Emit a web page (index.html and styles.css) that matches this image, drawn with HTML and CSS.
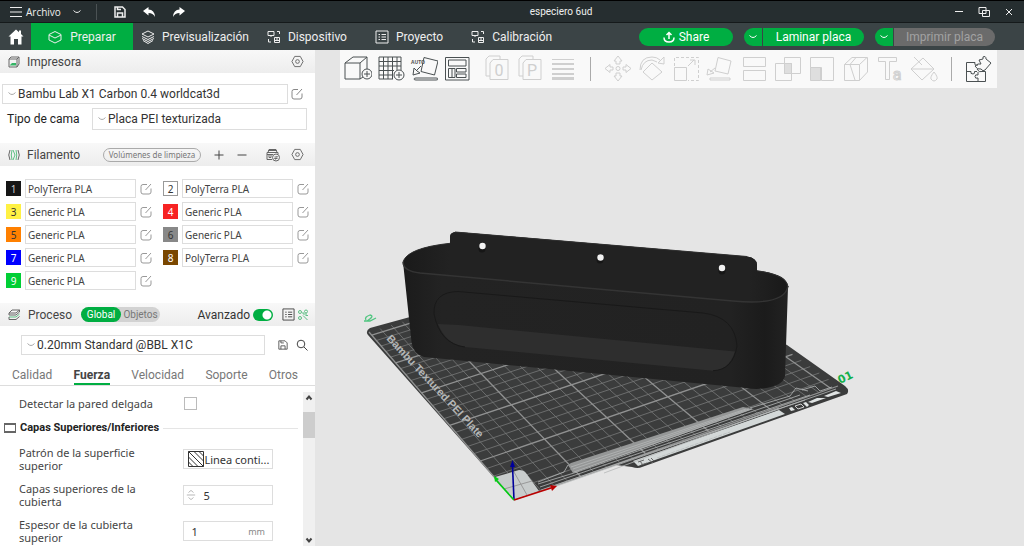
FILE: index.html
```html
<!DOCTYPE html>
<html lang="es">
<head>
<meta charset="utf-8">
<title>especiero 6ud</title>
<link rel="stylesheet" href="styles.css">
</head>
<body>
<svg class="defs" aria-hidden="true">
  <symbol id="chev" viewBox="0 0 10 10"><path d="M1.500 3.500Q5 7.500 8.500 3.500"/></symbol>
  <symbol id="edit" viewBox="0 0 12 12"><path d="M7 1.500H3Q1 1.500 1 3.500V9Q1 11 3 11H9Q11 11 11 9V5.500M5.500 7L11 1"/></symbol>
  <symbol id="gear" viewBox="0 0 14 14"><path d="M4 1.500H10L13 7L10 12.500H4L1 7Z"/><circle cx="7" cy="7" r="2"/></symbol>
  <symbol id="device" viewBox="0 0 14 14"><path d="M1 1.500H7V5.500H1ZM4 5.500V7M10 1.500H12.500V4M1.500 9V12H4M7.500 7.500H12.500V12.500H7.500ZM10 8V10M8 10.500H12"/></symbol>
  <symbol id="list" viewBox="0 0 14 14"><path d="M1 1H13V13H1ZM3.500 4.500H5M6.500 4.500H11M3.500 7H5M6.500 7H11M3.500 9.500H5M6.500 9.500H11"/></symbol>
  <symbol id="save" viewBox="0 0 12 12"><path d="M1 1H8.500L11 3.500V11H1ZM3.500 11V7H8.500V11M3.500 1V3.500H7"/></symbol>
</svg>

<header class="titlebar">
  <button class="file"><svg class="ic i12" viewBox="0 0 12 12"><path d="M0 1.500H12M0 6H12M0 10.500H12"/></svg>Archivo</button>
  <button class="drop" aria-label="Menú"><svg class="ic i10"><use href="#chev"/></svg></button>
  <span class="rule"></span>
  <button aria-label="Guardar"><svg class="ic i12 strong"><use href="#save"/></svg></button>
  <button aria-label="Deshacer"><svg class="solid i14" viewBox="0 0 14 14"><path d="M1 6L6.500 2V4.500Q12.500 4.500 13 12Q11 8 6.500 8V10.500Z"/></svg></button>
  <button aria-label="Rehacer"><svg class="solid i14" viewBox="0 0 14 14"><path d="M13 6L7.500 2V4.500Q1.500 4.500 1 12Q3 8 7.500 8V10.500Z"/></svg></button>
  <h1>especiero 6ud</h1>
  <div class="window">
    <button aria-label="Minimizar"><svg class="ic i12" viewBox="0 0 12 12"><path d="M2 5.500H10"/></svg></button>
    <button aria-label="Restaurar"><svg class="ic i12" viewBox="0 0 12 12"><path d="M1 1.500H8V7.500H1ZM4.500 4.500H11.500V10.500H4.500Z"/></svg></button>
    <button aria-label="Cerrar"><svg class="ic i12" viewBox="0 0 12 12"><path d="M3 3L9 9M9 3L3 9"/></svg></button>
  </div>
</header>

<nav class="topnav">
  <a class="home" href="#inicio" aria-label="Inicio"><svg class="solid i16" viewBox="0 0 16 16"><path d="M8 0.500L0.500 7.500H2.500V15.500H6V10H10V15.500H13.500V7.500H15.500L13 5V1.500H11V3.300Z"/></svg></a>
  <a class="tab active" href="#preparar"><svg class="ic i14" viewBox="0 0 14 14"><path d="M7 1.500L13 4.500V10L7 13L1 10V4.500ZM1 5L7 8L13 5"/></svg>Preparar</a>
  <a class="tab prev" href="#previsualizacion"><svg class="ic i14" viewBox="0 0 14 14"><path d="M7 1L13 4L7 7L1 4ZM1 6.500L7 9.500L13 6.500M1 8.500L7 11.500L13 8.500M2 10.500L7 13.500L12 10.500"/></svg>Previsualización</a>
  <a class="tab dev" href="#dispositivo"><svg class="ic i14"><use href="#device"/></svg>Dispositivo</a>
  <a class="tab proj" href="#proyecto"><svg class="ic i14"><use href="#list"/></svg>Proyecto</a>
  <a class="tab" href="#calibracion"><svg class="ic i14"><use href="#device"/></svg>Calibración</a>
  <div class="actions">
    <button class="pill share"><svg class="ic i12 strong" viewBox="0 0 12 12"><path d="M6 8V1.500M3.500 4L6 1.500L8.500 4M1 6.500Q1 11 6 11Q11 11 11 6.500"/></svg>Share</button>
    <div class="split"><button class="more" aria-label="Opciones de laminado"><svg class="ic i10"><use href="#chev"/></svg></button><button class="go">Laminar placa</button></div>
    <div class="split"><button class="more" aria-label="Opciones de impresión"><svg class="ic i10"><use href="#chev"/></svg></button><button class="go" disabled>Imprimir placa</button></div>
  </div>
</nav>

<main>
<aside>
  <div class="head">
    <svg class="ic i12" viewBox="0 0 12 12"><path d="M1 3L3 1H11V8L9 11H1ZM1 3H9V11M9 3L11 1"/><path class="gfill" d="M2 9L4 7H8V9.500H2Z"/></svg>
    <h2>Impresora</h2>
    <button class="end" aria-label="Ajustes de impresora"><svg class="ic i13"><use href="#gear"/></svg></button>
  </div>
  <div class="printer">
    <label class="combo"><svg class="ic i10"><use href="#chev"/></svg><select aria-label="Impresora"><option>Bambu Lab X1 Carbon 0.4 worldcat3d</option></select></label>
    <button aria-label="Editar impresora"><svg class="ic i12"><use href="#edit"/></svg></button>
  </div>
  <div class="bed">
    <label for="bed">Tipo de cama</label>
    <div class="combo tall"><svg class="ic i10"><use href="#chev"/></svg><select id="bed"><option>Placa PEI texturizada</option></select></div>
  </div>

  <div class="head filhead">
    <svg class="ic i12" viewBox="0 0 12 12"><path d="M2 1Q-0.500 6 2 11M10 1Q12.500 6 10 11"/><path class="gline" d="M4 1Q2.500 6 4 11M8 1Q9.500 6 8 11M5 1L7 6L5 11"/></svg>
    <h2>Filamento</h2>
    <button class="purge">Volúmenes de limpieza</button>
    <button class="plus" aria-label="Añadir"><svg class="ic i12 dark" viewBox="0 0 12 12"><path d="M6 1.500V10.500M1.500 6H10.500"/></svg></button>
    <button aria-label="Quitar"><svg class="ic i12 dark" viewBox="0 0 12 12"><path d="M1.500 6H10.500"/></svg></button>
    <button class="end" aria-label="AMS"><svg class="ic i14" viewBox="0 0 14 14"><path d="M2 4.500L3 1.500H10L11 4.500M1 4.500H12V6M1 4.500V11.500H6M2 2.500H11M1 6.500H7M3 7V9.500H5V7"/><circle cx="10" cy="9.500" r="3.500"/><path d="M8.500 9H11.500L10.500 8M11.500 10.500H8.500L9.500 11.500"/></svg></button>
    <button aria-label="Ajustes de filamento"><svg class="ic i13"><use href="#gear"/></svg></button>
  </div>
  <div class="filaments">
    <div class="fil"><button class="sw c1">1</button><select aria-label="Filamento 1"><option>PolyTerra PLA</option></select><button aria-label="Editar 1"><svg class="ic i12"><use href="#edit"/></svg></button></div>
    <div class="fil"><button class="sw c2">2</button><select aria-label="Filamento 2"><option>PolyTerra PLA</option></select><button aria-label="Editar 2"><svg class="ic i12"><use href="#edit"/></svg></button></div>
    <div class="fil"><button class="sw c3">3</button><select aria-label="Filamento 3"><option>Generic PLA</option></select><button aria-label="Editar 3"><svg class="ic i12"><use href="#edit"/></svg></button></div>
    <div class="fil"><button class="sw c4">4</button><select aria-label="Filamento 4"><option>Generic PLA</option></select><button aria-label="Editar 4"><svg class="ic i12"><use href="#edit"/></svg></button></div>
    <div class="fil"><button class="sw c5">5</button><select aria-label="Filamento 5"><option>Generic PLA</option></select><button aria-label="Editar 5"><svg class="ic i12"><use href="#edit"/></svg></button></div>
    <div class="fil"><button class="sw c6">6</button><select aria-label="Filamento 6"><option>Generic PLA</option></select><button aria-label="Editar 6"><svg class="ic i12"><use href="#edit"/></svg></button></div>
    <div class="fil"><button class="sw c7">7</button><select aria-label="Filamento 7"><option>Generic PLA</option></select><button aria-label="Editar 7"><svg class="ic i12"><use href="#edit"/></svg></button></div>
    <div class="fil"><button class="sw c8">8</button><select aria-label="Filamento 8"><option>PolyTerra PLA</option></select><button aria-label="Editar 8"><svg class="ic i12"><use href="#edit"/></svg></button></div>
    <div class="fil"><button class="sw c9">9</button><select aria-label="Filamento 9"><option>Generic PLA</option></select><button aria-label="Editar 9"><svg class="ic i12"><use href="#edit"/></svg></button></div>
  </div>

  <div class="head prochead">
    <svg class="ic i12" viewBox="0 0 12 12"><path d="M4 1H11.500L8 4H1ZM1 4V6H8L11.500 3V1"/><path class="gline" d="M1 8H8L11.500 5"/><path d="M1 10.500H8L11.500 7.500M1 8V10.500"/></svg>
    <h2>Proceso</h2>
    <div class="seg"><button class="on">Global</button><button>Objetos</button></div>
    <label class="adv end">Avanzado<input type="checkbox" role="switch" checked></label>
    <button aria-label="Lista"><svg class="ic i13 dark"><use href="#list"/></svg></button>
    <button class="cmp" aria-label="Comparar"><svg class="ic i12 green" viewBox="0 0 12 12"><circle cx="3" cy="3" r="1.500"/><circle cx="9" cy="2.500" r="1.500"/><circle cx="3" cy="9" r="1.500"/><path d="M6 3V5H10M6 6.500L10.500 11M8.500 6.500H11"/></svg></button>
  </div>
  <div class="preset">
    <label class="combo"><svg class="ic i10"><use href="#chev"/></svg><select aria-label="Proceso"><option>0.20mm Standard @BBL X1C</option></select></label>
    <button aria-label="Guardar perfil"><svg class="ic i10 dark"><use href="#save"/></svg></button>
    <button aria-label="Buscar"><svg class="ic i12 dark" viewBox="0 0 12 12"><circle cx="5" cy="5" r="3.800"/><path d="M8 8L11.500 11.500"/></svg></button>
  </div>
  <nav class="ptabs"><a href="#calidad">Calidad</a><a class="on" href="#fuerza">Fuerza</a><a href="#velocidad">Velocidad</a><a href="#soporte">Soporte</a><a href="#otros">Otros</a></nav>
  <div class="params">
    <div class="plist">
      <div class="param first"><label for="thin">Detectar la pared delgada</label><input id="thin" type="checkbox"></div>
      <h3><svg class="ic i12" viewBox="0 0 12 12"><path d="M0.500 1.500H11.500V10.500H0.500Z"/><path class="thick" d="M0 2H12M0 10H12"/></svg>Capas Superiores/Inferiores</h3>
      <div class="param"><label for="pat">Patrón de la superficie superior</label>
        <div class="field"><svg class="hatch" viewBox="0 0 16 16"><path d="M0.500 0.500H15.500V15.500H0.500ZM0.500 11L5 15.500M0.500 6L10 15.500M0.500 0.500L15.500 15.500M6 0.500L15.500 10M11 0.500L15.500 5"/></svg><select id="pat"><option>Linea conti...</option></select></div></div>
      <div class="param"><label for="lay">Capas superiores de la cubierta</label>
        <div class="field"><svg class="spin" viewBox="0 0 12 16"><path d="M3 5L6 2.500L9 5M1 8H11M3 11L6 13.500L9 11"/></svg><input id="lay" type="text" value="5"></div></div>
      <div class="param"><label for="thk">Espesor de la cubierta superior</label>
        <div class="field"><input id="thk" class="pad" type="text" value="1"><span class="unit">mm</span></div></div>
    </div>
    <div class="scroll"><svg viewBox="0 0 12 12"><path d="M3.500 7.500L6 4.500L8.500 7.500"/></svg><span class="thumb"></span><svg viewBox="0 0 12 12"><path d="M3.500 4.500L6 7.500L8.500 4.500"/></svg></div>
  </div>
</aside>

<section class="view">
  <svg class="scene" viewBox="315 50 709 496" role="img" aria-label="Vista 3D de la placa">
    <defs>
      <linearGradient id="body" x1="403" x2="788" y1="0" y2="0" gradientUnits="userSpaceOnUse">
        <stop offset="0" stop-color="#1b1b1b"/><stop offset=".1" stop-color="#232323"/><stop offset=".85" stop-color="#222"/><stop offset=".94" stop-color="#1b1b1b"/><stop offset="1" stop-color="#222"/>
      </linearGradient>
      <linearGradient id="wall" x1="403" x2="788" y1="0" y2="0" gradientUnits="userSpaceOnUse">
        <stop offset="0" stop-color="#1a1a1a"/><stop offset=".12" stop-color="#222"/><stop offset=".9" stop-color="#222"/><stop offset="1" stop-color="#191919"/>
      </linearGradient>
    </defs>
    <path class="plate" d="M370 328L410 317L640 262L787 345L845 386Q850 390 847 394L642 467Q638 469 632 467L616 465L514 500L368 335Q365 331 370 328Z"/>
    <g id="grid"></g>
    <path class="patch" d="M514 500L495 477L519 470Q524 470 526 473L539 491Z"/>
    <path class="patchline" d="M504 489L532 481M514 472L527 495"/>
    <path class="band" d="M568 465L571 463L743 407L753 409L573 473Z"/>
    <path class="bandlines" d="M571 467L746 409M573 469L749 409M574 472L752 409M568 465L564 472L538 482M538 484L574 473L800 395M540 487L810 395M541 490L805 400M545 490L836 389M750 408L790 396L796 388L808 391M802 390L815 386L820 391L832 387"/>
    <path class="strip" d="M633 461L779 410L785 414L638 466Z"/>
    <path class="striplines" d="M638 462L644 460M641 465L647 463M640 461L643 465M648 459L653 463M651 458L654 461"/>
    <path class="stripmid" d="M657 458L730 432"/>
    <path class="bandlines" d="M604 473L779 408"/>
    <path class="white" d="M808 402L817 398L826 398L812 403ZM824 396L836 391L841 393L828 397ZM789 408L792 407L795 410L791 411ZM803 403L806 402L809 405L807 407Z"/>
    <path class="whiteline" d="M795 406L801 404L804 407L798 409Z"/>
    <text class="plate-text" transform="translate(386 339) rotate(47)">Bambu Textured PEI Plate</text>
    <path class="box" d="M403 262Q407 248 450 243.300V237Q450 232 457 232L747 256.500Q757 258 757 265V270.700Q788 274 788 287L785 376Q783 386 763 388.500Q755 389.500 746 388L424 357Q413 354 411.500 342Z"/>
    <path class="inner" d="M404 262Q407 248 450 243.500V237Q450 232 457 232L747 256.500Q757 258 757 265V270.700Q787 275 787 287Q785 301 758 302.500L733 301L420 273Q403 270 404 262Z"/>
    <path class="rim" d="M403 262Q403 271 420 273L620 291L733 301Q785 306 788 286"/>
    <path class="rim soft" d="M403 262Q407 248 450 243.300M455 232L747 256.500M757 270.700Q787 275 788 287"/>
    <path class="floor" d="M438 324L459 325L735 351.500Q729 370 713 370.700L465 347Q446 344 438 324Z"/>
    <path class="pocket" d="M465 347Q440 344 434 314Q433 292 458 291.500L703 313Q735 317 737 346Q733 370 713 370.700"/>
    <g class="shade"><circle cx="482" cy="249" r="3.500"/><circle cx="600" cy="260" r="3.500"/><circle cx="722" cy="271" r="3.500"/></g>
    <g class="holes"><circle cx="482.500" cy="246" r="3.200"/><circle cx="600.500" cy="257.500" r="3.200"/><circle cx="722" cy="268" r="3.200"/></g>
    <path class="ax z" d="M514 500L512.500 466"/><path class="az" d="M510 467L512.500 460L515 467Z"/>
    <path class="ax y" d="M514 500L496 480"/><path class="ay" d="M494 476L499 479L495 482Z"/>
    <path class="ax x" d="M514 500L551 488"/><path class="axx" d="M550 485L557 486L552 491Z"/>
    <text class="num" transform="translate(840 384) rotate(-26)">01</text>
    <path class="mark" d="M364 321L370 321L376 318M366 320Q364 317 370 315Q375 316 367 321"/>
  </svg>
  <div class="toolbar">
    <div class="tg g1">
      <button aria-label="Añadir"><svg viewBox="0 0 28 28"><path d="M1 8H16V24H1ZM1 8L9 2H23L16 8M23 2V14M16 24L19 22"/><circle cx="23" cy="19" r="5"/><path d="M20 19H26M23 16V22"/></svg></button>
      <button aria-label="Añadir placa"><svg viewBox="0 0 28 28"><path d="M2 2H24V15M16 24H2V2M6.500 2V24M11 2V24M15.500 2V24M20 2V15M2 6.500H24M2 11H24M2 15.500H17M2 20H16"/><circle cx="22" cy="20" r="5"/><path d="M19 20H25M22 17V23"/></svg></button>
      <button aria-label="Orientar"><svg viewBox="0 0 28 28"><path d="M14 2.500L28 6L24.500 20L11 16.500ZM6 23H26Q28 23 28 24Q28 25 26 25H6Q4 25 4 24Q4 23 6 23ZM11 11L6 16M4 13L3 20L10 18L7 16Z"/><text x="1" y="9">AUTO</text></svg></button>
      <button aria-label="Organizar"><svg viewBox="0 0 28 28"><path d="M2.500 2.500H26V25H2.500ZM5.500 5H23V11H5.500ZM5.500 13.500H12V22.500H5.500ZM9 13.500V22.500M13.500 13.500H23V17H13.500ZM13.500 19H23V22.500H13.500Z"/></svg></button>
      <button class="off gap" disabled aria-label="Dividir en objetos"><svg viewBox="0 0 28 28"><path d="M7 21H3V4L6 1H17V4M7 8L10 4.500H25V24.500H7Z"/><text class="big" x="16" y="21">0</text></svg></button>
      <button class="off" disabled aria-label="Dividir en piezas"><svg viewBox="0 0 28 28"><path d="M7 21H3V4L6 1H17V4M7 8L10 4.500H25V24.500H7Z"/><text class="big" x="16" y="21">P</text></svg></button>
      <button class="off" disabled aria-label="Altura de capa"><svg viewBox="0 0 28 28"><path d="M3 4.500H25M3 8.500H25M3 9.500H25M3 13.500H25M3 14.500H25M3 18.500H25M3 19.500H25M3 22.500H25M3 23.500H25M3 24.500H25"/></svg></button>
    </div>
    <span class="sep"></span>
    <div class="tg g2">
      <button class="off" disabled aria-label="Mover"><svg viewBox="0 0 28 28"><path d="M14 1L18 6H16V9H12V6H10ZM14 26L18 21H16V18H12V21H10ZM1 13.500L6 9.500V12H9V15H6V17.500ZM27 13.500L22 9.500V12H19V15H22V17.500Z"/><circle cx="14" cy="13.500" r="2"/></svg></button>
      <button class="off" disabled aria-label="Rotar"><svg viewBox="0 0 28 28"><path d="M14 8L24 17L14 25L5 17ZM2 15Q2 2 14 2Q19 2 22 5M20 8L26 9V2ZM3 15Q5 5 14 5L19 7"/></svg></button>
      <button class="off" disabled aria-label="Escalar"><svg viewBox="0 0 28 28"><path d="M2.500 12.500H14.500V25.500H2.500ZM16 11L22 5M18 5H23V10"/><path stroke-dasharray="3 2" d="M2.500 11V2.500H26.500V25.500H16"/></svg></button>
      <button class="off" disabled aria-label="Apoyar en cara"><svg viewBox="0 0 28 28"><path d="M12 2.500L25 6L22 19L9 16ZM4 23H24V25H4ZM9 13L4 17M2 14L1 20L8 18Z"/></svg></button>
      <button class="off" disabled aria-label="Cortar"><svg viewBox="0 0 28 28"><path d="M3.500 2.500H25.500V11.500H3.500ZM3.500 15.500H25.500V25.500H3.500Z"/></svg></button>
      <button class="off" disabled aria-label="Booleanas"><svg viewBox="0 0 28 28"><path d="M10.500 2.500H26.500V18.500H10.500ZM1.500 8.500H17.500V25.500H1.500Z"/><path class="tint" d="M10.500 8.500H17.500V18.500H10.500Z"/></svg></button>
      <button class="off" disabled aria-label="Pintar soportes"><svg viewBox="0 0 28 28"><path d="M2.500 2.500H25.500V25.500H13.500V12.500H2.500Z"/><path class="tint" d="M2.500 12.500H12.500V25.500H2.500Z"/></svg></button>
      <button class="off" disabled aria-label="Pintar costura"><svg viewBox="0 0 28 28"><path d="M2.500 9.500L10 2.500H25.500V17L17.500 25.500H2.500ZM2.500 9.500H17.500V25.500M17.500 9.500L25 2.500M8 9.500L14 2.500M8 9.500L13 25"/></svg></button>
      <button class="off" disabled aria-label="Texto"><svg viewBox="0 0 28 28"><path d="M2.500 2.500H20.500V6.500H13.500V24.500H9.500V6.500H2.500Z"/><text class="big line" x="21" y="25">a</text></svg></button>
      <button class="off" disabled aria-label="Pintar color"><svg viewBox="0 0 28 28"><path d="M13 3L24 14L12 25L1 14ZM1 14H24M4 2L12 10M24 17Q20 22 21 24Q24 28 27 24Q28 22 24 17"/></svg></button>
    </div>
    <span class="sep"></span>
    <button aria-label="Ensamblaje"><svg viewBox="0 0 28 28"><path d="M1.500 7.500H10Q9 11 13 10M13 26.500H1.500V7.500M1.500 16.500H6Q5 19 8 19Q10 19 9.500 16.500H12M12 14Q14 18 17 16.500H20.500V26.500H13V23Q10 24 10 21.500Q10 19 13 20V17M14 5L18 4Q17 1 20 1.500Q21 2 21 4L26 8L20 15Q18 17 16 14Q12 15 10 11Q13 8 16 9Z"/></svg></button>
  </div>
</section>
</main>
<script src="grid.js"></script>
</body>
</html>
```
FILE: grid.js
```js
// Projects the 256 mm bed onto the view and draws one line per centimetre.
const p0 = [514, 500], p1 = [838, 386], p2 = [640, 248], p3 = [369, 332];
const dx1 = p1[0] - p2[0], dx2 = p3[0] - p2[0], dx3 = p0[0] - p1[0] + p2[0] - p3[0];
const dy1 = p1[1] - p2[1], dy2 = p3[1] - p2[1], dy3 = p0[1] - p1[1] + p2[1] - p3[1];
const det = dx1 * dy2 - dx2 * dy1;
const g = (dx3 * dy2 - dx2 * dy3) / det;
const h = (dx1 * dy3 - dx3 * dy1) / det;
function project(mmX, mmY) {
  const u = mmX / 256, v = mmY / 256, w = g * u + h * v + 1;
  const x = ((p1[0] - p0[0] + g * p1[0]) * u + (p3[0] - p0[0] + h * p3[0]) * v + p0[0]) / w;
  const y = ((p1[1] - p0[1] + g * p1[1]) * u + (p3[1] - p0[1] + h * p3[1]) * v + p0[1]) / w;
  return Math.round(x * 10) / 10 + " " + Math.round(y * 10) / 10;
}
const group = document.getElementById("grid");
for (const bold of [false, true]) {
  let d = "";
  for (let i = 0; i <= 25; i++) {
    if ((i % 5 === 0) !== bold) continue;
    const k = i * 10;
    d += "M" + project(k, 0) + "L" + project(k, 256) + "M" + project(0, k) + "L" + project(256, k);
  }
  const path = document.createElementNS("http://www.w3.org/2000/svg", "path");
  path.setAttribute("d", d);
  path.setAttribute("class", bold ? "bold" : "fine");
  group.appendChild(path);
}
```
FILE: styles.css
```css
* { box-sizing: border-box; }
body {
  margin: 0; height: 100vh; display: flex; flex-direction: column; overflow: hidden;
  font-family: "Noto Sans", "Open Sans", sans-serif; font-size: 11px; color: #333; background: #e5e5e5;
}
button, input, select { font: inherit; color: inherit; background: none; border: 0; padding: 0; margin: 0; }
button { display: flex; align-items: center; justify-content: center; }
select { appearance: none; min-width: 0; }
a { color: inherit; text-decoration: none; }
h1, h2, h3 { margin: 0; font-weight: 400; }
svg { flex: none; }
.topnav, .head, .printer, .bed, .preset, .ptabs, .plist h3 { font-family: Roboto, "Noto Sans", sans-serif; }
.defs { display: none; }
.ic { fill: none; stroke: currentColor; stroke-width: 1; }
.ic.strong { stroke-width: 1.5; }
.ic.dark { color: #444; }
.ic.green, .gline { stroke: #5fbf85; }
.gfill { fill: #35b566; stroke: none; }
.thick { stroke-width: 2; }
.solid { fill: #fff; }
.i10 { width: 10px; height: 10px; }
.i12 { width: 12px; height: 12px; }
.i13 { width: 13px; height: 13px; }
.i14 { width: 14px; height: 14px; }
.i16 { width: 16px; height: 16px; }

.titlebar { position: relative; display: flex; align-items: center; height: 23px; flex: none; padding-left: 10px; background: #262e30; color: #eee; border-top: 1px solid #000; border-bottom: 1px solid #151a1b; }
.file { gap: 4px; font: 10px "Open Sans", sans-serif; }
.rule { width: 1px; height: 16px; background: #4b5254; margin: 0 17px 0 14px; }
.titlebar > button + button { margin-left: 16px; }
.titlebar > .drop { margin-left: 11px; }
.titlebar h1 { position: absolute; left: 0; right: 0; text-align: center; padding-left: 98px; font: 10px Roboto, sans-serif; pointer-events: none; }
.window { display: flex; gap: 13px; margin-left: auto; padding-right: 9px; }

.topnav { display: flex; align-items: stretch; height: 27px; flex: none; background: #3b4446; color: #eee; font-size: 12px; }
.topnav a { display: flex; align-items: center; }
.home { width: 31px; justify-content: center; }
.tab { gap: 7px; }
.tab.active { width: 102px; justify-content: center; background: #00ae42; gap: 8px; margin-right: 8px; }
.prev { margin-right: 18px; }
.dev { margin-right: 28px; }
.proj { margin-right: 28px; }
.actions { display: flex; align-items: center; gap: 11px; margin-left: auto; padding-right: 29px; }
.actions button { height: 18px; color: #fff; }
.share { width: 94px; border-radius: 9px; background: #00ae42; gap: 4px; }
.split { display: flex; gap: 1px; }
.actions .more { width: 18px; border-radius: 9px 0 0 9px; background: #00ae42; }
.actions .go { width: 101px; border-radius: 0 9px 9px 0; background: #00ae42; }
.actions .go:disabled { background: #6b6b6b; color: #a2a2a2; }

main { flex: 1; display: flex; min-height: 0; }
aside { width: 315px; flex: none; background: #fff; display: flex; flex-direction: column; }
.head { display: flex; align-items: center; height: 23px; flex: none; padding: 0 11px 0 8px; background: linear-gradient(#f8f8f8, #ededed); color: #666; }
.head h2 { font-size: 12px; color: #444; margin-left: 7px; }
.end { margin-left: auto; }
.combo { display: flex; align-items: center; height: 20px; flex: 1; border: 1px solid #ddd; padding-left: 4px; gap: 1px; color: #aaa; }
.combo select { color: #333; flex: 1; font-size: 12px; }
.printer { display: flex; align-items: center; gap: 3px; padding: 11px 12px 4px 2px; color: #888; }
.bed { display: flex; align-items: center; padding: 0 8px 0 7px; color: #222; font-size: 12px; }
.bed label { width: 85px; }
.combo.tall { height: 22px; }

.filhead { margin-top: 13px; }
.purge { height: 14px; width: 98px; border: 1px solid #aaa; border-radius: 7px; color: #777; font: 8px "Noto Sans", sans-serif; white-space: nowrap; margin-left: auto; }
.filhead > button { flex: none; }
.filhead > .plus { margin: 0 11px 0 12px; }
.filhead .end { margin: 0 11px 0 18px; }
.filaments { display: grid; grid-template-columns: 146px 146px; gap: 4px 11px; padding: 13px 6px 1px; color: #999; }
.fil { display: flex; align-items: center; }
.fil select { flex: 1; height: 19px; border: 1px solid #ddd; padding-left: 2px; margin: 0 4px; color: #444; font-size: 10px; }
.sw { width: 15px; height: 15px; font-size: 10px; color: #fff; }
.c1 { background: #161616; color: #ccc; }
.c2 { background: #fff; color: #333; border: 1px solid #999; }
.c3 { background: #fff144; color: #333; }
.c4 { background: #f72323; }
.c5 { background: #ff8000; color: #333; }
.c6 { background: #888; color: #333; }
.c7 { background: #00f; }
.c8 { background: #7a4700; }
.c9 { background: #00cf35; }

.prochead { margin-top: 12px; padding-right: 6px; }
.prochead h2 { margin-left: 8px; }
.seg { display: flex; margin-left: 9px; border-radius: 8px; background: #d2d2d2; font-size: 10px; color: #777; }
.seg button { height: 15px; width: 39px; }
.seg .on { background: #00ae42; color: #fff; border-radius: 8px; width: 40px; }
.adv { display: flex; align-items: center; gap: 3px; font-size: 12px; color: #333; margin-right: 9px; }
.adv input { appearance: none; width: 20px; height: 12px; border-radius: 6px; background: radial-gradient(circle at 14px 6px, #fff 4px, #00ae42 5px); }
.cmp { margin-left: 2px; }
.preset { display: flex; align-items: center; padding: 9px 7px 0 21px; color: #888; }
.preset .combo { margin-right: 13px; }
.preset button + button { margin-left: 8px; }
.ptabs { display: flex; justify-content: space-between; padding: 9px 17px 0 12px; border-bottom: 1px solid #ddd; color: #777; font-size: 12px; }
.ptabs a { height: 21px; border-bottom: 2px solid transparent; line-height: 22px; }
.ptabs .on { color: #444; font-weight: 700; border-color: #00ae42; }
.params { display: flex; flex: 1; min-height: 0; overflow: hidden; }
.plist { flex: 1; min-width: 0; padding-top: 7px; }
.param { display: flex; align-items: center; height: 36px; padding: 0 30px 0 19px; }
.param label { width: 165px; line-height: 13px; padding-right: 30px; color: #444; }
.param.first { height: 20px; }
.param.first label { padding: 0; }
.param.first input { appearance: none; width: 13px; height: 13px; border: 1px solid #bbb; }
.plist h3 { display: flex; align-items: center; gap: 4px; font-size: 11px; font-weight: 700; color: #222; padding: 7px 5px 5px 4px; line-height: 16px; }
.plist h3 .ic { color: #666; }
.plist h3::after { content: ""; flex: 1; height: 1px; background: #e5e5e5; }
.field { display: flex; align-items: center; width: 90px; height: 20px; border: 1px solid #ddd; padding-left: 4px; }
.field input, .field select { flex: 1; min-width: 0; width: 20px; color: #333; }
.field input { padding-left: 3px; }
.hatch { width: 16px; height: 16px; fill: none; stroke: #333; }
.spin { width: 10px; height: 16px; fill: none; stroke: #aaa; margin-left: -2px; margin-right: 4px; }
.unit { color: #888; font-size: 9px; padding-right: 7px; }
.scroll { width: 12px; margin-top: 6px; background: #f0f0f0; display: flex; flex-direction: column; }
.scroll svg { width: 12px; height: 12px; fill: none; stroke: #444; stroke-width: 2; }
.thumb { height: 26px; margin-top: 8px; margin-bottom: auto; background: #cdcdcd; }

.view { flex: 1; display: grid; min-width: 0; }
.scene, .toolbar { grid-area: 1 / 1; }
.scene { width: 100%; height: 100%; min-height: 0; }
.toolbar { z-index: 1; justify-self: start; align-self: start; margin-left: 25px; display: flex; align-items: center; height: 38px; padding: 0 4px; background: #f9f9f9; }
.toolbar svg { width: 28px; height: 28px; fill: none; stroke: #4a5052; }
.toolbar button { width: 28px; height: 28px; }
.toolbar .off svg { stroke: #cfcfcf; }
.toolbar .off .tint { fill: #dedede; }
.toolbar text { font-size: 5px; font-weight: 700; fill: #555; stroke: none; }
.toolbar .big { font: 16px Roboto, sans-serif; fill: #cfcfcf; text-anchor: middle; }
.toolbar .line { fill: none; stroke: #cfcfcf; }
.tg { display: flex; gap: 5px; }
.tg .gap { margin-left: 7px; }
.g2 { gap: 6px; }
.sep { width: 1px; height: 24px; margin: 0 13px; background: #aaa; }

.plate { fill: #3b3c3c; }
#grid path { fill: none; }
.fine { stroke: #777878; stroke-width: .8; }
.bold { stroke: #909191; stroke-width: 1.3; }
.patch { fill: #c8cccc; }
.patchline { fill: none; stroke: #999; }
.band { fill: #959797; }
.bandlines { fill: none; stroke: #b5b7b7; stroke-width: .8; }
.strip { fill: #d3d8d8; }
.striplines { fill: none; stroke: #666; }
.stripmid { fill: none; stroke: #bcc0c0; stroke-dasharray: 4 1; }
.white { fill: #dfe3e3; }
.whiteline { fill: none; stroke: #ccc; }
.plate-text { font-family: "Liberation Sans", sans-serif; font-size: 11px; font-weight: 700; fill: #b5b7b7; }
.box { fill: url(#body); }
.inner { fill: url(#wall); }
.rim { fill: none; stroke: #343434; stroke-width: 1.5; }
.rim.soft { stroke: #303030; stroke-width: 1; }
.floor { fill: #2e2e2e; }
.pocket { fill: none; stroke: #191919; }
.shade { fill: #161616; }
.holes { fill: #f2f2f2; }
.ax { fill: none; stroke-width: 1.6; }
.z { stroke: #00009c; } .az { fill: #00009c; }
.y { stroke: #0c1; } .ay { fill: #0c1; }
.x { stroke: #b00; } .axx { fill: #b00; }
.num { font-family: "DejaVu Sans", sans-serif; font-size: 11px; font-weight: 700; fill: #12b04b; }
.mark { fill: none; stroke: #4fc57f; stroke-width: 1.3; }
```
